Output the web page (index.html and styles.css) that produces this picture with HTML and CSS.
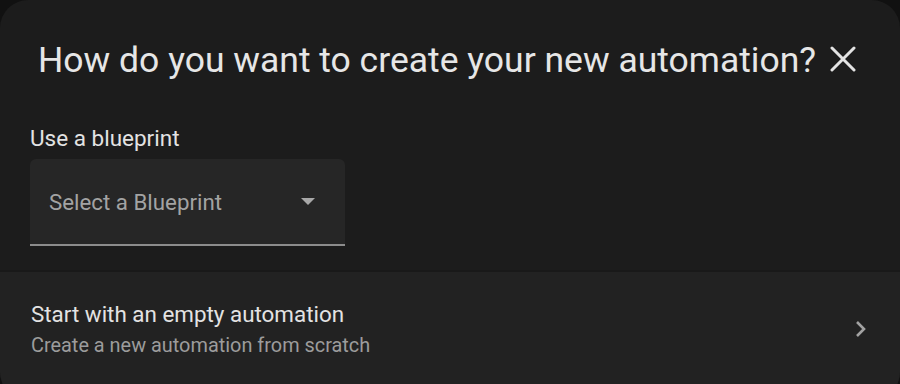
FILE: index.html
```html
<!DOCTYPE html>
<html lang="en">
<head>
    <meta charset="UTF-8">
    <meta name="viewport" content="width=device-width, initial-scale=1.0">
    <title>New automation</title>
    <link rel="stylesheet" href="styles.css">
</head>
<body>
    <div class="dialog">
        <div class="dialog-header">
            <h2>How do you want to create your new automation?</h2>
            <button class="close-btn" aria-label="Close">
                <svg width="26" height="26" viewBox="0 0 26 26">
                    <path d="M2 2 L24 24 M24 2 L2 24" stroke="#e3e3e3" stroke-width="3" stroke-linecap="round"/>
                </svg>
            </button>
        </div>

        <div class="blueprint">
            <label class="field-label">Use a blueprint</label>
            <div class="select">
                <span class="select-text">Select a Blueprint</span>
                <span class="select-arrow"></span>
            </div>
        </div>

        <a href="#" class="list-item">
            <div class="list-text">
                <span class="primary">Start with an empty automation</span>
                <span class="secondary">Create a new automation from scratch</span>
            </div>
            <svg class="chevron" width="14" height="20" viewBox="0 0 14 20">
                <path d="M3 3 L10 10 L3 17" fill="none" stroke="#a2a2a2" stroke-width="2.6"/>
            </svg>
        </a>
    </div>
</body>
</html>
```

FILE: styles.css
```css
* {
    margin: 0;
    padding: 0;
    box-sizing: border-box;
    font-family: Roboto, "Noto Sans", sans-serif;
}

body {
    background-color: #111111;
    width: 900px;
    height: 384px;
    overflow: hidden;
}

.dialog {
    background-color: #1c1c1c;
    border-radius: 28px;
    height: 400px;
    overflow: hidden;
}

.dialog-header {
    display: flex;
    align-items: flex-start;
    padding: 38px 0 0 38px;
    height: 104px;
}

.dialog-header h2 {
    color: #e6e6e6;
    font-size: 35.5px;
    font-weight: 400;
    line-height: 44px;
}

.close-btn {
    background: none;
    border: none;
    margin-left: 14px;
    margin-top: 8px;
    cursor: pointer;
}

.blueprint {
    padding: 19px 30px 0;
    height: 166px;
}

.field-label {
    display: block;
    color: #e3e3e3;
    font-size: 22.5px;
    line-height: 30px;
    margin-bottom: 6px;
}

.select {
    width: 315px;
    height: 87px;
    background-color: #262626;
    border-radius: 6px 6px 0 0;
    border-bottom: 2px solid #8c8c8c;
    display: flex;
    align-items: center;
    justify-content: space-between;
    padding: 0 30px 0 19px;
}

.select-text {
    color: #a3a3a3;
    font-size: 22.3px;
}

.select-arrow {
    width: 0;
    height: 0;
    border-left: 7px solid transparent;
    border-right: 7px solid transparent;
    border-top: 7px solid #a8a8a8;
}

.list-item {
    display: flex;
    align-items: center;
    justify-content: space-between;
    background-color: #222222;
    border-top: 2px solid #191919;
    padding: 26px 32px 30px 31px;
    text-decoration: none;
}

.list-text {
    display: flex;
    flex-direction: column;
}

.primary {
    color: #e3e3e3;
    font-size: 22.4px;
    line-height: 32px;
}

.secondary {
    color: #9c9c9c;
    font-size: 19.9px;
    line-height: 28px;
    margin-top: 2px;
}
```
